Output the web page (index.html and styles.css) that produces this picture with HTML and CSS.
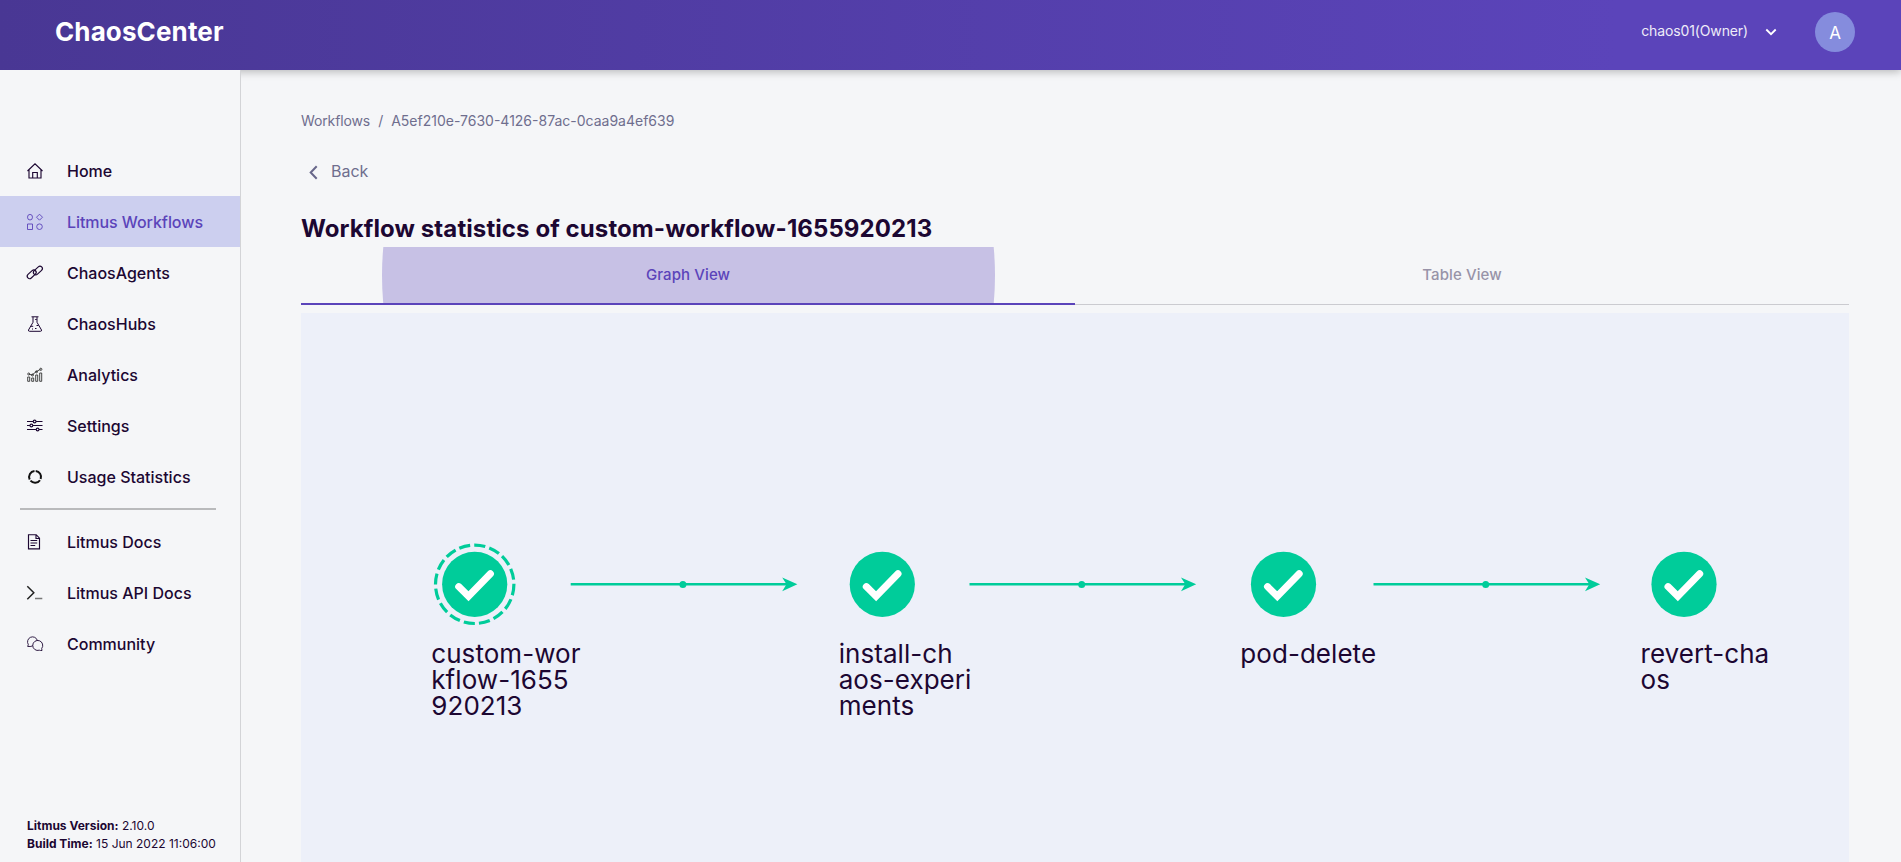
FILE: index.html
```html
<!DOCTYPE html>
<html lang="en">
<head>
<meta charset="utf-8">
<title>ChaosCenter</title>
<link rel="stylesheet" href="styles.css">
</head>
<body>
<header class="header">
  <div class="brand">ChaosCenter</div>
  <div class="project">chaos01(Owner)</div>
  <svg class="chevron" width="12" height="8" viewBox="0 0 12 8"><path d="M1.300 1.500 6 6.200 10.700 1.500"/></svg>
  <div class="avatar">A</div>
</header>
<div class="body">
  <aside class="sidebar">
    <nav class="nav">
      <a class="item"><svg class="icon" viewBox="0 0 16 16"><path d="M.5 8 8 .8 15.500 8M2 6.800V15h12V6.800M5.700 15V9.500h4.600V15"/></svg>Home</a>
      <a class="item active"><svg class="icon" viewBox="0 0 16 16"><ellipse cx="3" cy="3.200" rx="2.500" ry="2.800"/><path d="M12.500.2 15.500 3.200 12.500 6.200 9.500 3.200ZM.5 10h5v5.500h-5Z"/><circle cx="12.500" cy="12.700" r="2.800"/></svg>Litmus Workflows</a>
      <a class="item"><svg class="icon" viewBox="0 0 16 16"><rect x="-5.200" y="-2.400" width="10.400" height="4.800" rx="2.400" transform="translate(4.700 9.300) rotate(-43)"/><rect x="-5.200" y="-2.400" width="10.400" height="4.800" rx="2.400" transform="translate(10.900 5.500) rotate(-43)"/></svg>ChaosAgents</a>
      <a class="item"><svg class="icon flask" viewBox="0 0 16 16"><path d="M4.500.8h7M6 1v5.300L1.500 14q-.3 1.300 1 1.300h11q1.300 0 1-1.300L10 6.300V1M3.800 10.300h2.400M9.500 9.500h2M8 12.500h1.500M5 13h1M8.200 3.500h1.500"/></svg>ChaosHubs</a>
      <a class="item"><svg class="icon gray" viewBox="0 0 16 16"><path d="M.7 10h2v4.300h-2ZM4.700 11h2v3.300h-2ZM8.700 8h2v6.300h-2ZM12.700 6h2v8.300h-2ZM2 7.200l3 .8 4-3.200 4.500-2.500"/><circle cx="1.700" cy="7" r="1"/><circle cx="5.500" cy="8" r="1"/><circle cx="9.500" cy="4.800" r="1"/><circle cx="13.800" cy="2.300" r="1.100"/></svg>Analytics</a>
      <a class="item"><svg class="icon" viewBox="0 0 16 16"><path d="M0 3.500h6.200M9 3.500h6.500M0 7.500h3M5.800 7.500h9.700M0 11.500h9.200M12 11.500h3.500"/><circle cx="7.600" cy="3.500" r="1.400"/><circle cx="4.400" cy="7.500" r="1.400"/><circle cx="10.600" cy="11.500" r="1.400"/></svg>Settings</a>
      <a class="item"><svg class="icon usage" viewBox="0 0 16 16"><path d="M8.700 2A6 6 0 0 1 13.700 10M13 11.200A6 6 0 0 1 3.500 11.700M2.700 10.500A6 6 0 0 1 7.500 2"/></svg>Usage Statistics</a>
      <hr class="divider">
      <a class="item"><svg class="icon" viewBox="0 0 16 16"><path d="M1.500.7h7.700l3.300 3.500v10.600h-11ZM9 .8v3.700h3.300M3.500 6.500h6.700M3.500 9h6.700M3.500 11.500h4.700"/></svg>Litmus Docs</a>
      <a class="item"><svg class="icon" viewBox="0 0 16 16"><path class="prompt" d="M.3 1.300 6.800 7.800.3 14.300"/><path class="prompt soft" d="M8 13.500h7.300"/></svg>Litmus API Docs</a>
      <a class="item"><svg class="icon thin" viewBox="0 0 16 16"><path d="M5.800 9.700Q4.500 10.800.7 10.500L1.300 8.500A5 5 0 1 1 10.300 4.300M14.700 12.500 15 14.500Q13.500 14.700 12.300 14.200A5 5 0 1 1 14.700 12.500Z"/></svg>Community</a>
    </nav>
    <div class="version"><div><b>Litmus Version:</b> 2.10.0</div><div><b>Build Time:</b> 15 Jun 2022 11:06:00</div></div>
  </aside>
  <main class="main">
    <div class="crumbs"><span class="crumb">Workflows</span><span>/</span><span>A5ef210e-7630-4126-87ac-0caa9a4ef639</span></div>
    <div class="back"><svg width="9" height="15" viewBox="0 0 9 15"><path d="M7.700 1.300 1.700 7.500 7.700 13.700"/></svg>Back</div>
    <h1 class="title">Workflow statistics of custom-workflow-1655920213</h1>
    <div class="tabs">
      <div class="tab selected"><span class="ripple"></span><span class="label">Graph View</span></div>
      <div class="tab"><span class="label">Table View</span></div>
    </div>
    <svg class="graph" width="1548" height="549" viewBox="301 313 1548 549">
      <defs>
        <g id="done"><circle class="disc" r="32.600"/><path class="tick" d="M-16 2.300-6.200 12 15.700-10.500"/></g>
        <g id="edge"><path class="line" d="M0 0H219"/><circle class="dot" cx="112.200" cy=".2" r="3.500"/><path class="dot" d="M226.700 0 211.500 6.900 215.800 0 211.500-6.900Z"/></g>
      </defs>
      <circle class="ring" cx="474.700" cy="584.300" r="39.200"/>
      <use href="#done" x="474.700" y="584.300"/>
      <use href="#done" x="882.300" y="584.300"/>
      <use href="#done" x="1283.500" y="584.300"/>
      <use href="#done" x="1684" y="584.300"/>
      <use href="#edge" x="570.700" y="584.300"/>
      <use href="#edge" x="969.500" y="584.300"/>
      <use href="#edge" x="1373.500" y="584.300"/>
      <text class="name"><tspan x="431.300" y="662.700">custom-wor</tspan><tspan x="431.300" y="688.600">kflow-1655</tspan><tspan x="431.300" y="714.500">920213</tspan></text>
      <text class="name"><tspan x="838.700" y="662.700">install-ch</tspan><tspan x="838.700" y="688.600">aos-experi</tspan><tspan x="838.700" y="714.500">ments</tspan></text>
      <text class="name" x="1240.300" y="662.700">pod-delete</text>
      <text class="name"><tspan x="1640.500" y="662.700">revert-cha</tspan><tspan x="1640.500" y="688.600">os</tspan></text>
    </svg>
  </main>
</div>
</body>
</html>
```
FILE: styles.css
```css
* { box-sizing: border-box; }
body { margin: 0; height: 862px; overflow: hidden; display: flex; flex-direction: column; background: #f5f6f8; color: #1c0732; font-family: Inter, "Liberation Sans", sans-serif; }
.header { height: 70px; flex: none; display: flex; align-items: center; padding: 0 46px 6px 55px; color: #fff; background: linear-gradient(90deg, #493794, #5b44ba 85%); box-shadow: 0 2px 8px rgba(0,0,0,.25); }
.brand { font-size: 26px; font-weight: 700; letter-spacing: .12px; flex: 1; padding-bottom: 1px; }
.project { font-size: 14px; letter-spacing: -.12px; color: #eeecf8; padding-bottom: 3px; }
.chevron { margin-left: 17px; fill: none; stroke: #fff; stroke-width: 1.800; }
.avatar { width: 40px; height: 40px; margin-left: 38px; border-radius: 50%; background: #858cdd; display: flex; align-items: center; justify-content: center; font-size: 17px; padding-top: 1px; }
.body { flex: 1; display: flex; min-height: 0; }
.sidebar { width: 241px; position: relative; display: flex; flex-direction: column; justify-content: space-between; border-right: 1px solid #d3d4d7; background: #f5f6f8; padding: 75px 0 9px; }
.nav { display: flex; flex-direction: column; }
.item { height: 51px; display: flex; align-items: center; padding-left: 27px; gap: 24px; font-size: 16px; font-weight: 500; }
.item.active { background: #cccfef; color: #5b44ba; letter-spacing: -.06px; }
.icon { width: 16px; height: 16px; fill: none; stroke: currentColor; stroke-width: 1.150; overflow: visible; }
.active .icon { stroke-width: .9; }
.icon.flask { stroke-width: 1; }
.icon.thin { stroke-width: .9; }
.icon.gray { stroke: #333; stroke-width: .9; }
.icon.usage { stroke: #111; stroke-width: 2; }
.prompt { stroke: #222; stroke-width: 1.500; }
.prompt.soft { stroke: #777; }
.divider { width: 196px; height: 2px; border: 0; background: #b9babc; margin: 6px 0 6px 20px; }
.version { padding-left: 27px; font-size: 12px; line-height: 18px; }
.main { flex: 1; padding: 0 52px 0 60px; display: flex; flex-direction: column; }
.crumbs { display: flex; gap: 8px; margin-top: 42px; font-size: 14px; line-height: 18px; color: #6f6e8e; }
.crumb { letter-spacing: -.12px; }
.back { display: flex; align-items: center; gap: 13px; margin-top: 31px; padding-left: 8px; font-size: 16px; line-height: 21px; color: #6f6e8e; }
.back svg { fill: none; stroke: #68678a; stroke-width: 2; margin-top: 2px; }
.title { margin: 32px 0 0; font-size: 24px; letter-spacing: .09px; line-height: 29px; height: 33px; font-weight: 700; }
.tabs { height: 58px; display: flex; flex: none; box-shadow: inset 0 -1px #cbcbd0; }
.tab { position: relative; overflow: hidden; flex: 1; display: flex; align-items: center; justify-content: center; padding-bottom: 2px; font-size: 15px; letter-spacing: .1px; font-weight: 500; color: #9893a8; border-bottom: 2px solid transparent; }
.tab.selected { color: #5b44ba; border-color: #5b44ba; }
.ripple { position: absolute; left: 81px; top: -278px; width: 613px; height: 613px; border-radius: 50%; background: #c7c1e5; }
.label { position: relative; }
.graph { display: block; margin-top: 8px; flex: none; background: #edf0f9; }
.disc, .dot { fill: #00cc9a; }
.tick { fill: none; stroke: #fff; stroke-width: 7; stroke-linecap: round; stroke-linejoin: miter; }
.line { stroke: #00cc9a; stroke-width: 2.400; }
.ring { fill: none; stroke: #00cc9a; stroke-width: 3.200; stroke-dasharray: 11.200 4.130; }
.name { font-size: 26px; letter-spacing: .05px; fill: #1c0732; }
```
